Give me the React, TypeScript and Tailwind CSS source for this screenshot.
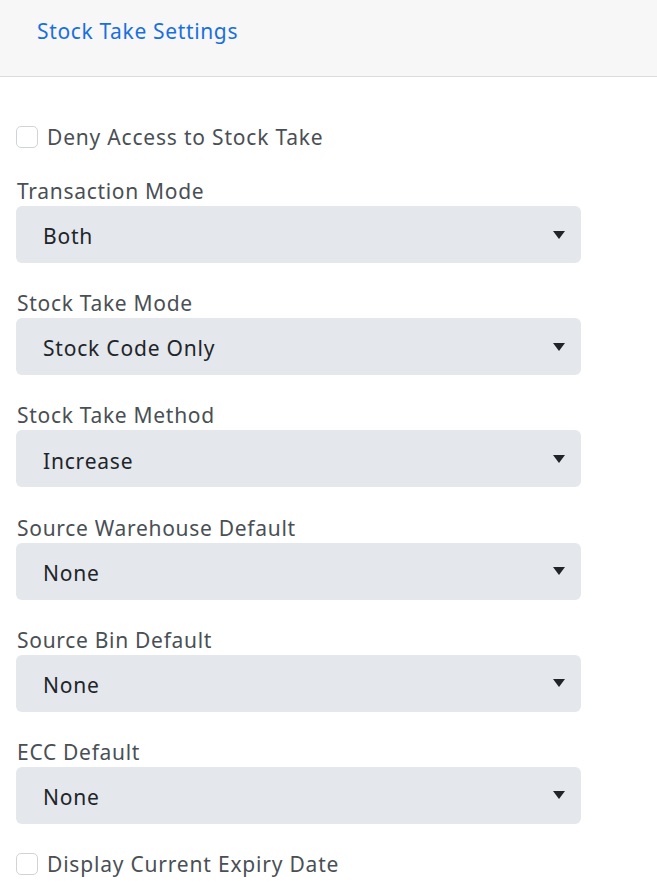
const selects = [
  ['Transaction Mode', 'Both'],
  ['Stock Take Mode', 'Stock Code Only'],
  ['Stock Take Method', 'Increase'],
  ['Source Warehouse Default', 'None'],
  ['Source Bin Default', 'None'],
  ['ECC Default', 'None']
];

function Check({ label }: { label: string }) {
  return (
    <label className="flex h-[28px] items-center gap-[9px] text-[21px] tracking-[0.8px] text-[#4a4f55]">
      <span className="h-[22px] w-[22px] rounded-[5px] border border-[#d0d4d9] bg-white" />
      <span className="pt-[2px]">{label}</span>
    </label>
  );
}

export default function App() {
  return (
    <div className="min-h-screen bg-white font-['Noto_Sans',sans-serif]">
      <div className="flex h-[77px] items-center border-b border-[#dcdcdc] bg-[#f7f7f7] px-[37px] pb-[12px]">
        <span className="text-[21px] tracking-[0.65px] text-[#1a6fe0]">Stock Take Settings</span>
      </div>

      <div className="w-[581px] pl-[16px] pt-[46px]">
        <Check label="Deny Access to Stock Take" />

        <div className="mt-[25px] flex flex-col gap-[25.2px]">
          {selects.map(([label, value]) => (
            <div key={label}>
              <div className="h-[30px] pl-px text-[21px] leading-[30px] tracking-[0.7px] text-[#4a4f55]">{label}</div>
              <div className="flex h-[57px] items-center justify-between rounded-[6px] bg-[#e4e7eb] pl-[27px] pr-[16px] text-[21px] tracking-[0.8px] text-[#212529]">
                <span className="pt-[5px]">{value}</span>
                <svg width="12" height="8" viewBox="0 0 12 8" className="fill-[#212529]">
                  <path d="M0 0h12L6 8z" />
                </svg>
              </div>
            </div>
          ))}
        </div>

        <div className="mt-[26px]">
          <Check label="Display Current Expiry Date" />
        </div>
      </div>
    </div>
  );
}
